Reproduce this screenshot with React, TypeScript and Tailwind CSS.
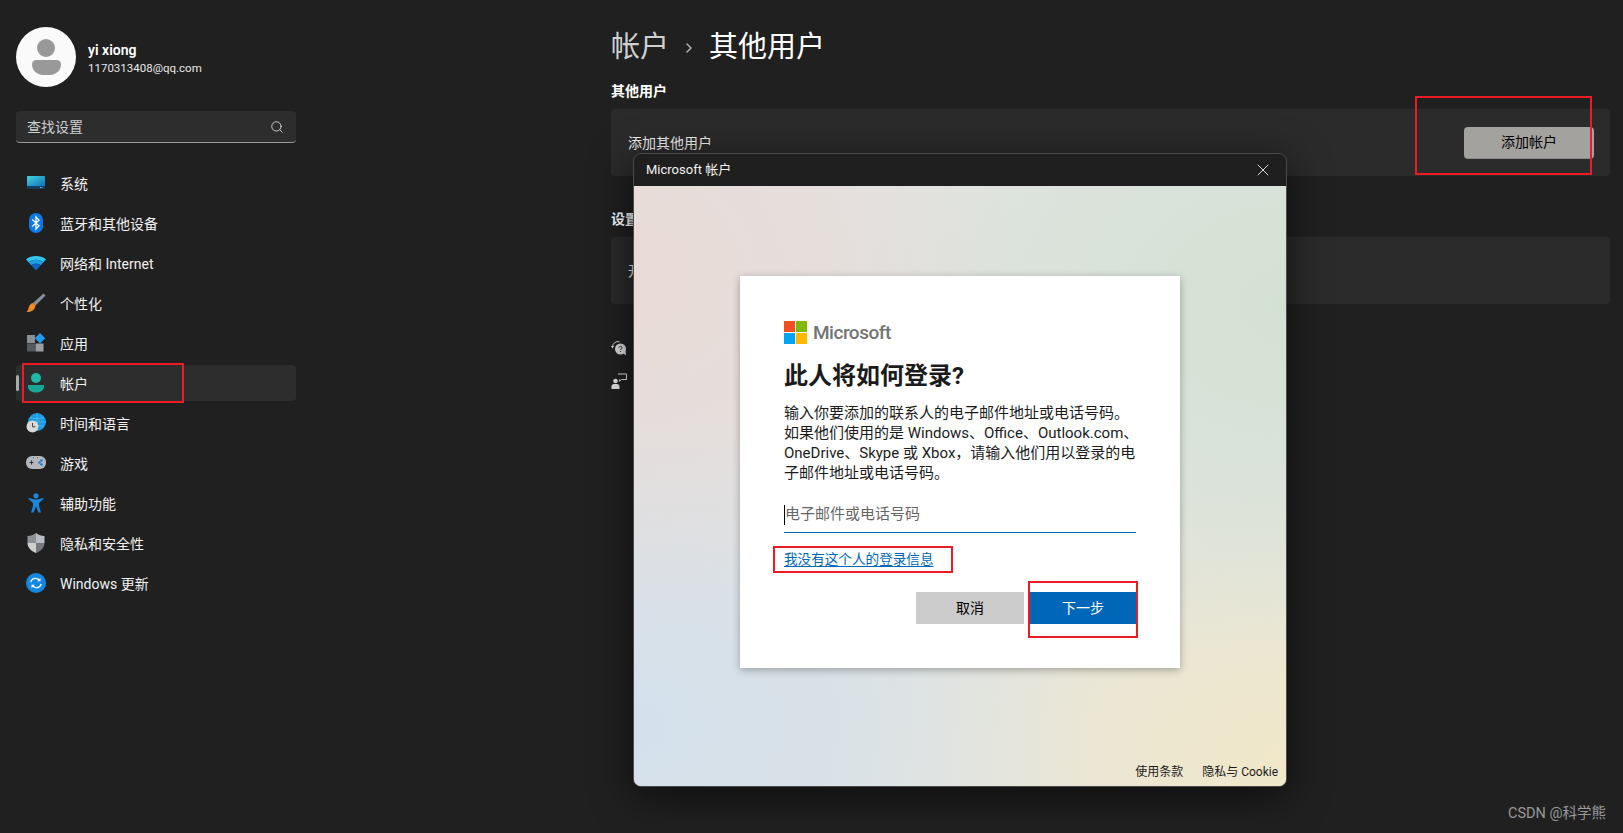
import { Search, X, ChevronRight } from "lucide-react";
import type { ReactNode } from "react";

const font = "font-['Roboto','Noto_Sans_CJK_SC',sans-serif]";

function SystemIcon() {
  return (
    <svg width="20" height="20" viewBox="0 0 20 20">
      <defs>
        <linearGradient id="sys" x1="0" y1="0" x2="1" y2="1">
          <stop offset="0" stopColor="#3fd4e0" />
          <stop offset="1" stopColor="#1470b8" />
        </linearGradient>
      </defs>
      <path d="M1 3.800a.8.8 0 0 1 .8-.8h16.400a.8.8 0 0 1 .8.8V13H1z" fill="url(#sys)" />
      <path d="M1 13h18v2.200a.8.8 0 0 1-.8.8H1.800a.8.8 0 0 1-.8-.8z" fill="#123f5e" />
      <rect x="15.500" y="14" width="1" height="1" fill="#7fb6d8" />
      <rect x="14" y="14" width="1" height="1" fill="#7fb6d8" />
    </svg>
  );
}

function BluetoothIcon() {
  return (
    <svg width="20" height="20" viewBox="0 0 20 20">
      <rect x="3" y="0" width="14" height="20" rx="7" fill="#0a7ae8" />
      <path d="M6.300 6.500 13 12.800 10 16V4l3 3.200-6.700 6.300" fill="none" stroke="#fff" strokeWidth="1.300" />
    </svg>
  );
}

function WifiIcon() {
  return (
    <svg width="20" height="20" viewBox="0 0 20 20">
      <path d="M0 6.300C5.600 1.900 14.400 1.900 20 6.300l-2.600 3C13 6 7 6 2.600 9.300z" fill="#35c6f0" />
      <path d="M2.600 9.300C7 6 13 6 17.400 9.300l-2.600 3C12 10.300 8 10.300 5.200 12.300z" fill="#1a9fe6" />
      <path d="M5.200 12.300C8 10.300 12 10.300 14.800 12.300L10 17.500z" fill="#0b66c2" />
    </svg>
  );
}

function BrushIcon() {
  return (
    <svg width="20" height="20" viewBox="0 0 20 20">
      <path d="M17.500 0.500 19.500 2.500 9.500 12.500 7 10z" fill="#8a919b" />
      <path d="M7 10l2.500 2.500C9.500 16.500 5 19.500 0.500 19c2-1.500 1.800-3.500 2.500-5.500 .8-1.900 2.500-3.500 4-3.500z" fill="#f08a24" />
    </svg>
  );
}

function AppsIcon() {
  return (
    <svg width="20" height="20" viewBox="0 0 20 20">
      <rect x="1" y="2" width="8" height="8" fill="#8b8f94" />
      <rect x="1" y="10.500" width="8" height="8" fill="#55585d" />
      <rect x="9.500" y="10.500" width="8" height="8" fill="#9a9da1" />
      <path d="M14 0l5.200 5.200L14 10.400 8.800 5.200z" fill="#1f9bf0" />
    </svg>
  );
}

function AccountIcon() {
  return (
    <svg width="20" height="20" viewBox="0 0 20 20">
      <circle cx="10" cy="5" r="5" fill="#1fb8a8" />
      <path d="M2 12h16v2c0 3.500-4 5.500-8 5.500S2 17.500 2 14z" fill="#19a695" />
    </svg>
  );
}

function TimeIcon() {
  return (
    <svg width="20" height="20" viewBox="0 0 20 20">
      <circle cx="11" cy="9" r="9" fill="#1b9ce2" />
      <path d="M11 0v18M2 9h18M4 4.500c4 1.500 10 1.500 14 0M4 13.500c4-1.500 10-1.500 14 0" stroke="#5fc8f2" strokeWidth=".6" fill="none" />
      <circle cx="6.500" cy="13.500" r="6" fill="#d8d8d8" />
      <path d="M6.500 10v3.800h2.800" fill="none" stroke="#444" strokeWidth="1" />
    </svg>
  );
}

function GameIcon() {
  return (
    <svg width="20" height="20" viewBox="0 0 20 20">
      <rect x="0" y="3" width="20" height="13" rx="6" fill="#b4b7bb" />
      <path d="M3.500 9.500h4M5.500 7.500v4" stroke="#333" strokeWidth="1.100" />
      <circle cx="15.500" cy="7.500" r="1.200" fill="#1a78d0" />
      <circle cx="13.500" cy="9.500" r="1.200" fill="#1a78d0" />
      <circle cx="15.500" cy="11.500" r="1.200" fill="#1a78d0" />
      <circle cx="7.500" cy="4.800" r=".5" fill="#333" />
      <circle cx="11.500" cy="4.800" r=".5" fill="#333" />
    </svg>
  );
}

function AccessIcon() {
  return (
    <svg width="20" height="20" viewBox="0 0 20 20">
      <circle cx="10" cy="2.800" r="2.600" fill="#1a86dc" />
      <path d="M2 5.500c1-.8 1.800-.6 3 0 3 1.300 7 1.300 10 0 1.200-.6 2-.8 3 0l-5 4.500v3l2 6.500h-2.500L10 13.500 7.500 19.500H5l2-6.500v-3z" fill="#1a86dc" />
    </svg>
  );
}

function ShieldIcon() {
  return (
    <svg width="20" height="20" viewBox="0 0 20 20">
      <path d="M10 0c2.500 2 5.500 3 8.500 3v7H10z" fill="#b9bcc0" />
      <path d="M10 0v10H1.500V3c3 0 6-1 8.500-3z" fill="#8d9196" />
      <path d="M1.500 10H10v10c-5-2-8.500-5.500-8.500-10z" fill="#cdcfd1" />
      <path d="M10 10h8.500c0 4.500-3.500 8-8.500 10z" fill="#75797e" />
    </svg>
  );
}

function UpdateIcon() {
  return (
    <svg width="20" height="20" viewBox="0 0 20 20">
      <circle cx="10" cy="10" r="10" fill="#1488e0" />
      <path d="M4.800 9c.6-2.800 3.600-4.300 6.300-3.300 1 .3 1.800 1 2.400 1.800M15.200 11c-.6 2.800-3.600 4.300-6.300 3.300-1-.3-1.800-1-2.400-1.800" fill="none" stroke="#fff" strokeWidth="1.300" />
      <path d="M14.500 5v3.300h-3.300zM5.500 15v-3.300h3.300z" fill="#fff" />
    </svg>
  );
}

function HelpIcon() {
  return (
    <svg width="16" height="16" viewBox="0 0 16 16">
      <path d="M1.500 7a5.500 5.500 0 0 1 7-5.300" fill="none" stroke="#ddd" strokeWidth="1" />
      <path d="M0 6h3L1.500 8.500z" fill="#ddd" />
      <circle cx="9.500" cy="9" r="5.500" fill="#ddd" />
      <path d="M12 13l3 2.500-.5-5z" fill="#ddd" />
      <path d="M8 7.800c0-2 3-2 3 0 0 1-1.500 1-1.500 2.200M9.500 11v.8" stroke="#222" strokeWidth="1" fill="none" />
    </svg>
  );
}

function FeedbackIcon() {
  return (
    <svg width="16" height="16" viewBox="0 0 16 16">
      <circle cx="4.500" cy="8" r="2.300" fill="#e6e6e6" />
      <path d="M0.500 16v-2.500c0-1.500 1-2.500 2.500-2.500h3c1.500 0 2.500 1 2.500 2.500V16z" fill="#e6e6e6" />
      <path d="M7 1h8.500v5.500h-5L8.500 8.200V6.500" fill="none" stroke="#e6e6e6" strokeWidth="1" />
    </svg>
  );
}

const navItems: { label: string; icon: ReactNode; active?: boolean }[] = [
  { label: "系统", icon: <SystemIcon /> },
  { label: "蓝牙和其他设备", icon: <BluetoothIcon /> },
  { label: "网络和 Internet", icon: <WifiIcon /> },
  { label: "个性化", icon: <BrushIcon /> },
  { label: "应用", icon: <AppsIcon /> },
  { label: "帐户", icon: <AccountIcon />, active: true },
  { label: "时间和语言", icon: <TimeIcon /> },
  { label: "游戏", icon: <GameIcon /> },
  { label: "辅助功能", icon: <AccessIcon /> },
  { label: "隐私和安全性", icon: <ShieldIcon /> },
  { label: "Windows 更新", icon: <UpdateIcon /> },
];

function Sidebar() {
  return (
    <aside className="w-[611px] shrink-0 pl-4">
      <div className="flex h-[60px] mt-[27px] items-center gap-[12px]">
        <div className="flex h-[60px] w-[60px] flex-col items-center justify-center gap-[3px] rounded-full bg-[#fafafa]">
          <div className="h-[18px] w-[18px] rounded-full bg-[#999999]" />
          <div className="h-[15px] w-[29px] rounded-t-[6px] rounded-b-[15px] bg-[#999999]" />
        </div>
        <div className="pt-[3px]">
          <p className="text-sm leading-[18px] font-semibold text-white">yi xiong</p>
          <p className="text-[11.500px] leading-[18px] text-[#e8e8e8]">1170313408@qq.com</p>
        </div>
      </div>
      <div className="mt-6 flex h-8 w-[280px] items-center justify-between rounded border-b border-b-[#9a9a9a] bg-[#2d2d2d] pl-[11px] pr-3">
        <span className="text-sm text-[#cfcfcf]">查找设置</span>
        <Search size={14} strokeWidth={1.5} className="text-[#e0e0e0]" />
      </div>
      <nav className="mt-[22px] flex w-[280px] flex-col gap-1">
        {navItems.map((item) => (
          <div
            key={item.label}
            className={`relative flex h-9 items-center gap-[14px] rounded pl-[10px] ${item.active ? "bg-[#2d2d2d]" : ""}`}
          >
            {item.active && <div className="absolute left-0 top-[10px] h-4 w-[3px] rounded-full bg-[#aaaaaa]" />}
            {item.icon}
            <span className="pt-[2px] text-sm text-[#f2f2f2]">{item.label}</span>
          </div>
        ))}
      </nav>
    </aside>
  );
}

function MainContent() {
  return (
    <main className="w-[999px] shrink-0 pt-[27px]">
      <h1 className="flex h-[42px] items-center text-[29px] text-white">
        <span className="text-[#cfcfcf]">帐户</span>
        <ChevronRight size={16} className="mx-3 text-[#bbbbbb]" />
        <span>其他用户</span>
      </h1>
      <h2 className="mt-[11px] text-sm leading-[22px] font-semibold text-white">其他用户</h2>
      <div className="mt-[7px] flex h-[67px] items-center justify-between rounded bg-[#2b2b2b] pl-[17px] pr-4">
        <span className="text-sm text-[#f0f0f0]">添加其他用户</span>
        <div className="flex h-8 w-[130px] items-center justify-center rounded border-b border-b-[#8a8a88] bg-[#a3a29f] text-sm text-black">添加帐户</div>
      </div>
      <h2 className="mt-8 text-sm leading-[22px] font-semibold text-white">设置</h2>
      <div className="mt-[7px] flex h-[67px] items-center rounded bg-[#2b2b2b] pl-[17px]">
        <span className="text-sm text-[#f0f0f0]">开</span>
      </div>
      <div className="mt-9 flex flex-col gap-[17px]">
        <HelpIcon />
        <FeedbackIcon />
      </div>
    </main>
  );
}

function Dialog() {
  return (
    <div className="absolute left-[633px] top-[153px] flex h-[634px] w-[654px] flex-col overflow-hidden rounded-lg border border-[#4a4a4a] bg-[#1f1f1f] shadow-[0_8px_40px_rgba(0,0,0,0.6)]">
      <div className="flex h-8 shrink-0 items-center justify-between pl-3 pr-[13px]">
        <span className="text-[13px] text-[#f0f0f0]">Microsoft 帐户</span>
        <X size={20} strokeWidth={1} className="text-white" />
      </div>
      <div className="relative flex flex-1 flex-col items-center bg-[radial-gradient(ellipse_60%_60%_at_0%_15%,#e9dad6,transparent),radial-gradient(ellipse_70%_60%_at_100%_20%,#d3e1d3,transparent),radial-gradient(ellipse_70%_60%_at_0%_90%,#d3e0ec,transparent),radial-gradient(ellipse_70%_50%_at_100%_95%,#f1e8c9,transparent),linear-gradient(#e2e4e2,#e2e4e2)] pt-[90px]">
        <div className="h-[392px] w-[440px] bg-white px-11 pt-[45px] shadow-[0_2px_8px_rgba(0,0,0,0.3)]">
          <div className="flex items-center gap-[6px]">
            <svg width="23" height="23" viewBox="0 0 23 23">
              <rect width="11" height="11" fill="#f25022" />
              <rect x="12" width="11" height="11" fill="#7fba00" />
              <rect y="12" width="11" height="11" fill="#00a4ef" />
              <rect x="12" y="12" width="11" height="11" fill="#ffb900" />
            </svg>
            <span className="text-[19px] leading-[23px] font-medium tracking-[-0.5px] text-[#737373]">Microsoft</span>
          </div>
          <h3 className="mt-[14px] text-2xl leading-[36px] font-bold text-[#1b1b1b]">此人将如何登录?</h3>
          <p className="mt-[9px] whitespace-nowrap text-[15px] leading-5 text-[#1b1b1b]">
            输入你要添加的联系人的电子邮件地址或电话号码。
            <br />
            如果他们使用的是 Windows、Office、Outlook.com、
            <br />
            OneDrive、Skype 或 Xbox，请输入他们用以登录的电
            <br />
            子邮件地址或电话号码。
          </p>
          <div className="mt-3 flex h-[38px] items-center border-b border-[#0067b8] pt-[2px]">
            <div className="h-[20px] w-px bg-black" />
            <span className="text-[15px] text-[#666666]">电子邮件或电话号码</span>
          </div>
          <a className="mt-4 block text-[13.600px] leading-5 text-[#0067b8] underline underline-offset-2">我没有这个人的登录信息</a>
          <div className="mt-[23px] flex justify-end gap-[6px]">
            <div className="flex h-8 w-[108px] items-center justify-center bg-[#cccccc] text-sm text-black">取消</div>
            <div className="flex h-8 w-[106px] items-center justify-center bg-[#0067b8] text-sm text-white">下一步</div>
          </div>
        </div>
        <div className="absolute bottom-[6px] right-2 flex gap-[19px] text-xs text-[#1b1b1b]">
          <span>使用条款</span>
          <span>隐私与 Cookie</span>
        </div>
      </div>
    </div>
  );
}

export default function App() {
  return (
    <div className={`relative flex h-[833px] w-[1623px] overflow-hidden bg-[#202020] ${font}`}>
      <Sidebar />
      <MainContent />
      <Dialog />
      {/* red annotation boxes */}
      <div className="absolute left-[1415px] top-[96px] h-[79px] w-[177px] border-2 border-[#ed1c24]" />
      <div className="absolute left-[22px] top-[363px] h-[40px] w-[162px] border-2 border-[#ed1c24]" />
      <div className="absolute left-[773px] top-[546px] h-[27px] w-[180px] border-2 border-[#ed1c24]" />
      <div className="absolute left-[1028px] top-[581px] h-[57px] w-[110px] border-2 border-[#ed1c24]" />
      <span className="absolute bottom-2 right-[17px] text-[14.500px] text-[#999999]">CSDN @科学熊</span>
    </div>
  );
}
